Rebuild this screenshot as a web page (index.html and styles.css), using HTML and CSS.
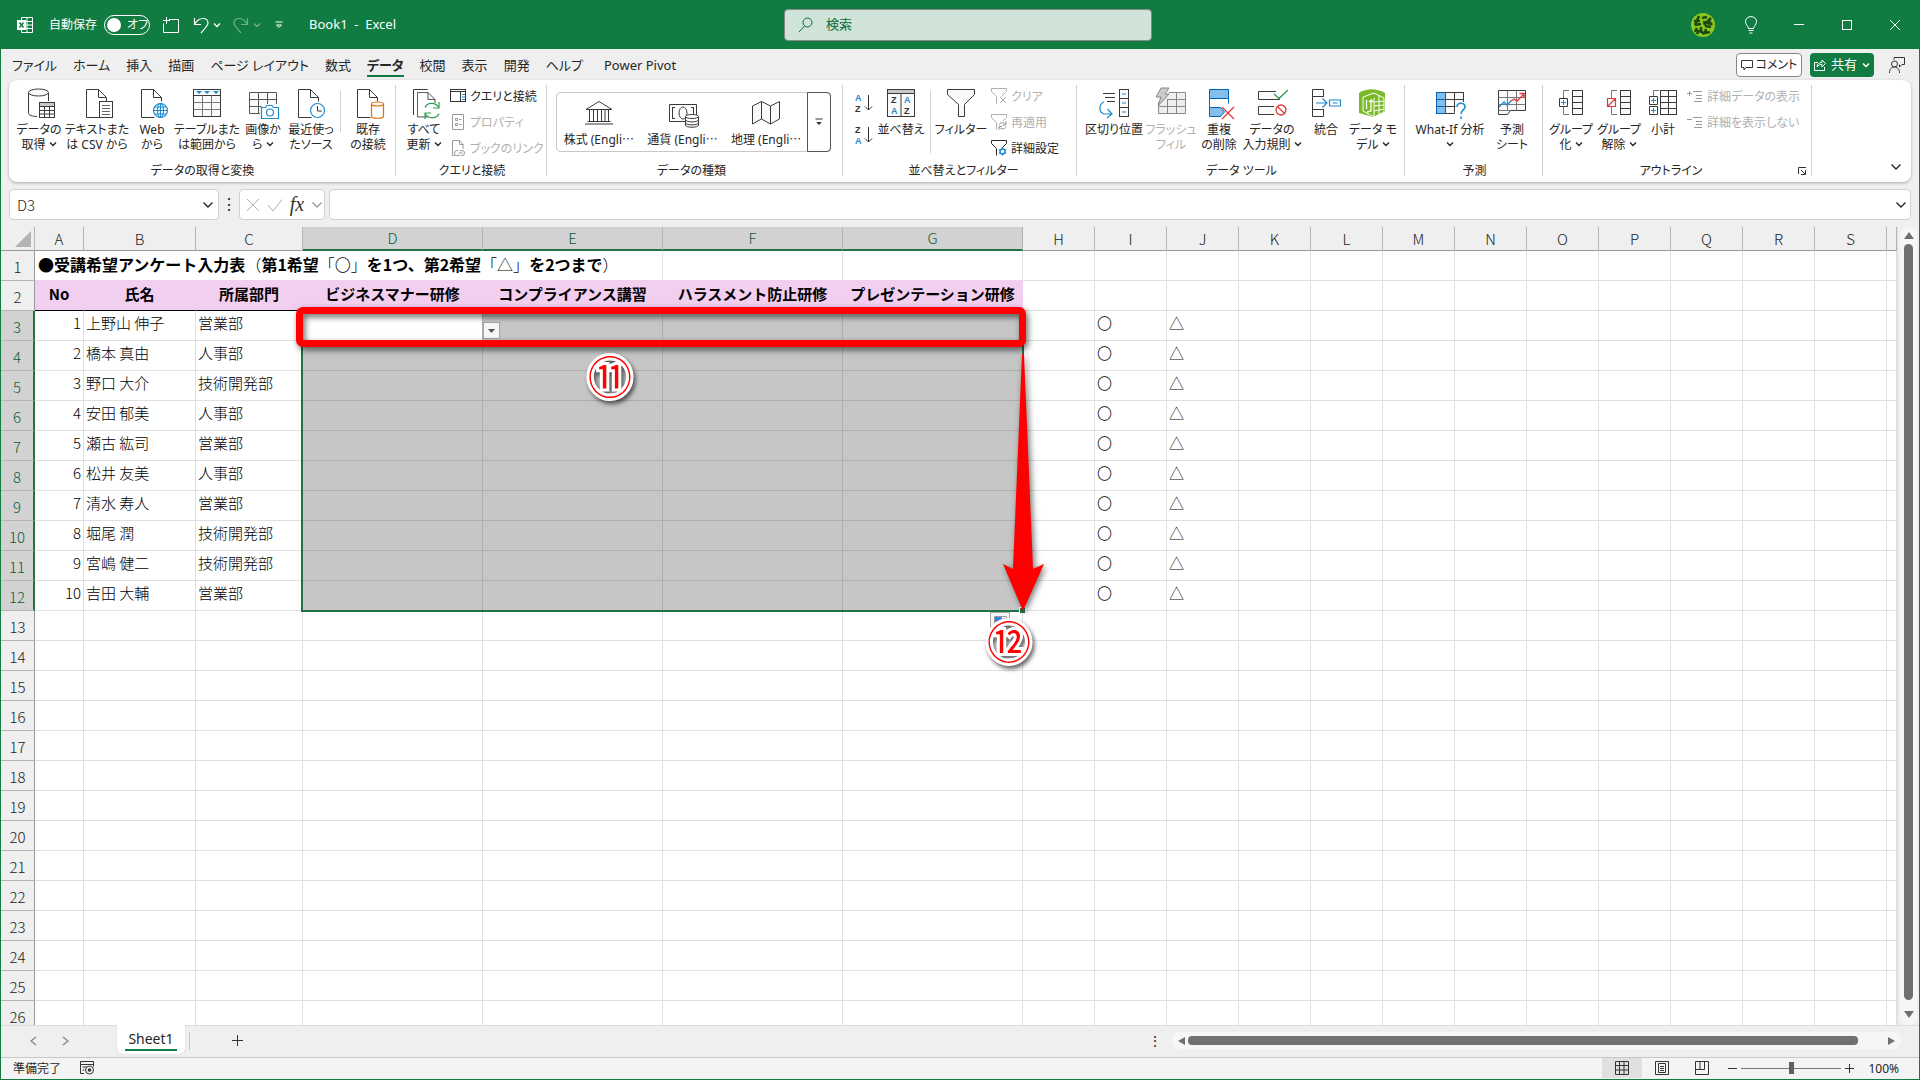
FILE: index.html
```html
<!DOCTYPE html>
<html lang="ja">
<head>
<meta charset="utf-8">
<title>Book1 - Excel</title>
<link rel="stylesheet" href="styles.css">
</head>
<body>
<svg class="defs" aria-hidden="true">
  <symbol id="chev" viewBox="0 0 8 6"><path d="M1 1.5l3 3 3-3" fill="none" stroke="currentColor" stroke-width="1.4"/></symbol>
  <symbol id="chev-lg" viewBox="0 0 12 8"><path d="M1.500 1.500l4.500 4.500 4.500-4.500" fill="none" stroke="currentColor" stroke-width="1.400"/></symbol>
  <symbol id="doc" viewBox="0 0 32 32"><path d="M.5 28.500V.5h12l8 8v4" fill="none" stroke="#3a3a3a"/><path d="M12.500.5v8h8" fill="none" stroke="#3a3a3a"/><path d="M.5 28.500h13" stroke="#3a3a3a"/></symbol>
  <symbol id="funnel" viewBox="0 0 16 16"><path d="M.5.5h15v3l-5 5v7M.5 3.500l5 5v7M.5.5v3" fill="none" stroke="currentColor"/></symbol>
</svg>
<div class="app">
  <header class="titlebar">
    <div class="title-left">
      <svg class="i16" viewBox="0 0 16 16" aria-hidden="true"><path d="M4.500 3V.5h11v15h-11V13M10 .5v15M5 4.500h10.500M9 8h6.500M5 11.500h10.500" fill="none" stroke="#fff"/><rect y="3" width="9" height="10" fill="#fff"/><path d="M2.500 5.500l4 5M6.500 5.500l-4 5" stroke="#107c41" stroke-width="1.500"/></svg>
      <label class="autosave"><span>自動保存</span><span class="pill"><input type="checkbox" role="switch" aria-label="自動保存"><span>オフ</span></span></label>
      <button class="tbtn save" aria-label="保存"><svg class="i16" viewBox="0 0 16 16"><path d="M6 2.500h9.500v13H.5v-9M0 3.500h7M3.500 0v7" fill="none" stroke="#fff"/></svg></button>
      <button class="tbtn" aria-label="元に戻す"><svg class="i16" viewBox="0 0 16 16"><path d="M1.500 1v6.500H8M1.500 7.500C4 3 7 1.500 10 1.500c3 0 5 2 5 4.500s-2 4-7 10" fill="none" stroke="#fff" stroke-width="1.200"/></svg><svg class="chev"><use href="#chev"/></svg></button>
      <button class="tbtn dim" aria-label="やり直し"><svg class="i16" viewBox="0 0 16 16"><path d="M14.500 1v6.500H8M14.500 7.500C12 3 9 1.500 6 1.500c-3 0-5 2-5 4.500s2 4 7 10" fill="none" stroke="#fff" stroke-width="1.200"/></svg><svg class="chev"><use href="#chev"/></svg></button>
      <button class="tbtn qat" aria-label="カスタマイズ"><svg viewBox="0 0 8 8" width="8" height="8"><path d="M.5 1h7" stroke="#fff"/><path d="M1.500 4h5L4 6.500z" fill="none" stroke="#fff"/></svg></button>
      <span class="doc-title">Book1&nbsp; -&nbsp; Excel</span>
    </div>
    <label class="search"><svg class="i16" viewBox="0 0 16 16" aria-hidden="true"><circle cx="9.500" cy="5.500" r="4.500" fill="none" stroke="#0e6b38"/><path d="M6.500 9L1 15" stroke="#0e6b38"/></svg><input type="text" placeholder="検索" aria-label="検索"></label>
    <div class="title-right">
      <button class="wbtn" aria-label="アカウント"><svg viewBox="0 0 24 24" width="24" height="24"><circle cx="12" cy="12" r="12" fill="#8bc81c"/><path d="M3 8h6M8 3L4 12M4 12l6-1M6 15l-2 4M10 14v6M11 5l5-1M20 5l-7 7M12 9l8 2M14 13l6 1M9 17l4 4M15 16l-1 4 5-1M18 8l3 4M6 21l2-4" fill="none" stroke="#1c4a12" stroke-width="2.600"/></svg></button>
      <button class="wbtn" aria-label="ヒント"><svg viewBox="0 0 12 18" width="12" height="18"><path d="M3.500 12.500c0-2.500-3-3.500-3-7C.5 2.500 3 .6 6 .6s5.500 1.900 5.500 4.900c0 3.500-3 4.500-3 7zM3.500 14.500h5M4.500 17h3" fill="none" stroke="#fff"/></svg></button>
      <button class="wbtn" aria-label="最小化"><svg viewBox="0 0 10 10" width="10" height="10"><path d="M0 4.500h10" stroke="#fff"/></svg></button>
      <button class="wbtn" aria-label="最大化"><svg viewBox="0 0 10 10" width="10" height="10"><rect x=".5" y=".5" width="9" height="9" fill="none" stroke="#fff"/></svg></button>
      <button class="wbtn" aria-label="閉じる"><svg viewBox="0 0 10 10" width="10" height="10"><path d="M0 0l10 10M10 0L0 10" stroke="#fff"/></svg></button>
    </div>
  </header>

  <nav class="tabs">
    <a href="#">ファイル</a><a href="#">ホーム</a><a href="#">挿入</a><a href="#">描画</a><a href="#">ページ レイアウト</a><a href="#">数式</a><a href="#" class="active" aria-current="page">データ</a><a href="#">校閲</a><a href="#">表示</a><a href="#">開発</a><a href="#">ヘルプ</a><a href="#" class="pivot">Power Pivot</a>
    <div class="tab-actions">
      <button class="comment"><svg viewBox="0 0 12 12" width="12" height="12"><path d="M.5 1.500h11v7H5L3 11V8.500H.5z" fill="none" stroke="#333"/></svg>コメント</button>
      <button class="share"><svg viewBox="0 0 12 12" width="12" height="12"><path d="M4 3.500H.5v8h10V8M3 8c0-3 2-4.500 5-4.500V1l3.500 3.500L8 8V5.500C6 5.500 4.500 6 3 8z" fill="none" stroke="#fff"/></svg>共有<svg class="chev"><use href="#chev"/></svg></button>
      <button class="plain" aria-label="共同作業"><svg class="i16" viewBox="0 0 16 16"><circle cx="5.500" cy="7" r="3" fill="none" stroke="#333"/><path d="M.5 16c0-4 2-6 5-6s5 2 5 6M5 2.500V.5h10.500v7H13l-2.500 2.500V7.500" fill="none" stroke="#333"/></svg></button>
    </div>
  </nav>

  <section class="ribbon" aria-label="データ">
    <div class="group g-get">
      <div class="tools">
        <button class="big w50"><svg viewBox="0 0 32 32"><path d="M5.500 5v20.500c0 1.500 4 3 8.500 3M25.500 5v8" fill="none" stroke="#3a3a3a"/><ellipse cx="15.500" cy="4.500" rx="10" ry="3.500" fill="#fafafa" stroke="#3a3a3a"/><rect x="16.500" y="14.500" width="15" height="15" fill="#fff" stroke="#3a3a3a"/><path d="M17 15h14v3H17z" fill="#c8c8c8"/><path d="M16.500 18.500h15M16.500 22.500h15M16.500 26h15M21.500 18.500v11M26.500 18.500v11" stroke="#3a3a3a"/></svg><span>データの<br>取得 <svg class="chev"><use href="#chev"/></svg></span></button>
        <button class="big w66"><svg viewBox="0 0 32 32"><use href="#doc" x="5" y="1" width="32" height="32"/><rect x="18.500" y="13.500" width="13" height="16" fill="#fff" stroke="#3a3a3a"/><path d="M21 17.500h8M21 20.500h8M21 23.500h8M21 26.500h8" stroke="#666"/></svg><span>テキストまた<br>は CSV から</span></button>
        <button class="big w44"><svg viewBox="0 0 32 32"><use href="#doc" x="5" y="1" width="32" height="32"/><g fill="#fff" stroke="#1e8bcd" stroke-width="1.200"><circle cx="24.500" cy="22.500" r="7"/><ellipse cx="24.500" cy="22.500" rx="3" ry="7" fill="none"/><path d="M17.500 22.500h14M18.500 19h12M18.500 26h12M24.500 15.500v14"/></g></svg><span>Web<br>から</span></button>
        <button class="big w66"><svg viewBox="0 0 32 32"><rect x="2.500" y="1.500" width="27" height="27" fill="#fafafa" stroke="#3a3a3a"/><path d="M2.500 7.500h27" stroke="#3a3a3a"/><path d="M2.500 14.500h27M2.500 21.500h27M11.500 7.500v21M20.500 7.500v21" stroke="#777"/><path d="M5 3h6L8 6zM13 3h6l-3 3zM22 3h6l-3 3z" fill="#1e8bcd"/></svg><span>テーブルまた<br>は範囲から</span></button>
        <button class="big w46"><svg viewBox="0 0 32 32"><rect x="2.500" y="4.500" width="27" height="21" fill="#fafafa"/><path d="M13 25.500H2.500v-21h27V16M2.500 11.500h27M2.500 18.500h12M11.500 4.500v21M20.500 4.500V16" fill="none" stroke="#555"/><path d="M14.500 19.500h4l1.500-2h5l1.500 2h5v11h-17z" fill="#fff" stroke="#1e8bcd" stroke-width="1.200"/><circle cx="23" cy="24.500" r="3.500" fill="none" stroke="#1e8bcd" stroke-width="1.200"/></svg><span>画像か<br>ら <svg class="chev"><use href="#chev"/></svg></span></button>
        <button class="big w50"><svg viewBox="0 0 32 32"><use href="#doc" x="3" y="1" width="32" height="32"/><circle cx="22.500" cy="22.500" r="7" fill="#fff" stroke="#1e8bcd" stroke-width="1.200"/><path d="M22.500 18v5H27" fill="none" stroke="#3a3a3a"/></svg><span>最近使っ<br>たソース</span></button>
        <i class="vsep"></i>
        <button class="big w46"><svg viewBox="0 0 32 32"><use href="#doc" x="5" y="1" width="32" height="32"/><path d="M19.500 16v12c0 3 12 3 12 0V16" fill="#fff" stroke="#e07000" stroke-width="1.200"/><ellipse cx="25.500" cy="16" rx="6" ry="2" fill="#fff" stroke="#e07000" stroke-width="1.200"/></svg><span>既存<br>の接続</span></button>
      </div>
      <div class="glabel">データの取得と変換</div>
    </div>
    <div class="group g-query">
      <div class="tools">
        <button class="big w44"><svg viewBox="0 0 32 32"><path d="M5.500 27V1.500h14" fill="none" stroke="#3a3a3a"/><use href="#doc" x="9" y="4" width="28" height="28"/><path d="M17 19.500c2-5 10-6 14 0M31 14v6h-6M31 25.500c-2 5-10 6-14 0M17 31v-6h6" fill="none" stroke="#2ea04f" stroke-width="1.200"/></svg><span>すべて<br>更新 <svg class="chev"><use href="#chev"/></svg></span></button>
        <div class="smalls">
          <button><svg class="i16" viewBox="0 0 16 16"><rect x=".5" y="1.500" width="15" height="12" fill="#fff" stroke="#333"/><path d="M.5 3.500h15M10.500 4v9.500" stroke="#333"/><path d="M12 6.500h3M12 9h3M12 11.500h3" stroke="#1e8bcd"/></svg>クエリと接続</button>
          <button disabled><svg class="i16" viewBox="0 0 16 16"><path d="M2.500.5h11v15h-11zM5.500 4.500h2v2h-2zM5.500 9.500h2v2h-2zM9 5.500h2.500M9 10.500h2.500" fill="none" stroke="#999"/></svg>プロパティ</button>
          <button disabled><svg class="i16" viewBox="0 0 16 16"><path d="M5 15.500H2.500V.5h7l3.500 4V9M9.500.5v4h4" fill="none" stroke="#999"/><path d="M8 10.500h-1a2 2 0 000 5h3M10 10.500h2a2 2 0 010 5h-1M8.500 13h4" fill="none" stroke="#999"/></svg>ブックのリンク</button>
        </div>
      </div>
      <div class="glabel">クエリと接続</div>
    </div>
    <div class="group g-types">
      <div class="gallery">
        <button><svg viewBox="0 0 32 26"><path d="M3 10.500l13-8 13 8zM4.500 22.500h23M2 25h28M6.500 11v11M10.500 11v11M14.500 11v11M18.500 11v11M22 11v11M25.500 11v11" fill="none" stroke="#3a3a3a"/></svg><span>株式 (Engli<span class="cjk">…</span></span></button>
        <button><svg viewBox="0 0 32 26"><path d="M18 22.500H2.500v-17h27V16M5 8.500h3M5 19.500h3M24 8.500h3M5.500 8v12M26.500 8v7" fill="none" stroke="#3a3a3a"/><ellipse cx="16" cy="14" rx="4" ry="6" fill="none" stroke="#3a3a3a"/><path d="M18.500 18v8c0 3 13 3 13 0v-8" fill="#fff" stroke="#3a3a3a"/><ellipse cx="25" cy="17.500" rx="6.500" ry="2" fill="#fff" stroke="#3a3a3a"/><path d="M18.500 21c1 2.500 12 2.500 13 0M18.500 24c1 2.500 12 2.500 13 0" fill="none" stroke="#3a3a3a"/></svg><span>通貨 (Engli<span class="cjk">…</span></span></button>
        <button><svg viewBox="0 0 32 26"><path d="M2.500 7l9-4.500 9 4.500 9-4.500V20l-9 5-9-5-9 5zM11.500 2.500V20M20.500 7v18" fill="#fafafa" stroke="#3a3a3a"/></svg><span>地理 (Engli<span class="cjk">…</span></span></button>
        <button class="more" aria-label="その他"><svg viewBox="0 0 8 8" width="8" height="8"><path d="M.5 1h7M2 4.500l2 2 2-2z" stroke="#333" fill="#333"/></svg></button>
      </div>
      <div class="glabel">データの種類</div>
    </div>
    <div class="group g-sort">
      <div class="tools">
        <div class="sorts">
          <button aria-label="昇順"><svg viewBox="0 0 18 20"><text x="0" y="8" class="ltr blue">A</text><text x="0" y="19" class="ltr">Z</text><path d="M13.500 2v15M10 13.500l3.500 3.500 3.500-3.500" fill="none" stroke="#333"/></svg></button>
          <button aria-label="降順"><svg viewBox="0 0 18 20"><text x="0" y="8" class="ltr">Z</text><text x="0" y="19" class="ltr blue">A</text><path d="M13.500 2v15M10 13.500l3.500 3.500 3.500-3.500" fill="none" stroke="#333"/></svg></button>
        </div>
        <button class="big w50"><svg viewBox="0 0 32 32"><rect x="2.500" y="1.500" width="27" height="27" fill="#fafafa" stroke="#3a3a3a"/><path d="M3 2h26v3H3z" fill="#c8c8c8"/><path d="M2.500 5.500h27M16 5.500v23" stroke="#3a3a3a"/><text x="6" y="15" class="ltr">Z</text><text x="6" y="26" class="ltr blue">A</text><text x="19" y="15" class="ltr blue">A</text><text x="19" y="26" class="ltr">Z</text></svg><span>並べ替え</span></button>
        <i class="vsep long"></i>
        <button class="big w52"><svg viewBox="0 0 32 32"><path d="M2.500 1.500h27v5l-10 10v12h-6v-12l-11-10z" fill="#fafafa" stroke="#3a3a3a"/></svg><span>フィルター</span></button>
        <div class="smalls">
          <button disabled><svg class="i16" viewBox="0 0 16 16"><use href="#funnel"/><path d="M8 9h8v7H8z" fill="#fff"/><path d="M9 9l6 6M15 9l-6 6" stroke="#aaa"/></svg>クリア</button>
          <button disabled><svg class="i16" viewBox="0 0 16 16"><use href="#funnel"/><path d="M7 7h9v9H7z" fill="#fff"/><path d="M8 11c1-3 5-3 7-.5M15 7v4h-3.500M15 12.500c-1 3-5 3-7 .5M8 16v-3.500h3" fill="none" stroke="#999"/></svg>再適用</button>
          <button><svg class="i16" viewBox="0 0 16 16"><use href="#funnel"/><path d="M7 8h9v8H7z" fill="#fff"/><circle cx="11.500" cy="11.500" r="2.500" fill="none" stroke="#1e8bcd" stroke-width="1.500"/><path d="M11.500 7.500v2M11.500 13.500v2M8 9.500l1.500 1M13.500 12.500l1.500 1M15 9.500l-1.500 1M9.500 12.500L8 13.500" stroke="#1e8bcd" stroke-width="1.500"/></svg>詳細設定</button>
        </div>
      </div>
      <div class="glabel">並べ替えとフィルター</div>
    </div>
    <div class="group g-tools">
      <div class="tools">
        <button class="big w62"><svg viewBox="0 0 32 32"><path d="M5 5.500h12M7 9.500h10M9 13.500h8" stroke="#3a3a3a"/><rect x="21.500" y="1.500" width="9" height="27" fill="#fafafa" stroke="#3a3a3a"/><path d="M21.500 10.500h9M21.500 19.500h9" stroke="#3a3a3a"/><path d="M24 6h4M24 15h4M24 24h4M6 14c-5 2-6 10 0 12h8M9.500 21l4.500 5-5 4" fill="none" stroke="#1e8bcd" stroke-width="1.200"/></svg><span>区切り位置</span></button>
        <button class="big w52" disabled><svg viewBox="0 0 32 32"><rect x="3.500" y="5.500" width="27" height="20" fill="#eee"/><path d="M3.500 14v11.500h27v-21H14M3.500 18.500h27M12 11.500h18.500M12.500 11v14.500M21.500 4.500v21" fill="none" stroke="#888"/><path d="M6 0h8l-4 6h4L3 18l3-9H1z" fill="#ccc" stroke="#888"/></svg><span>フラッシュ<br>フィル</span></button>
        <button class="big w44"><svg viewBox="0 0 32 32"><path d="M6.500 1.500h19v9h-19z" fill="#83beec" stroke="#0063b1"/><path d="M6.500 10.500v9M25.500 10.500v5" stroke="#0063b1"/><path d="M6.500 19.500h11l4 4.500-4 4.500h-11z" fill="#83beec" stroke="#0063b1"/><path d="M19 19l12 12M31 19L19 31" stroke="#e03a3a" stroke-width="1.300"/></svg><span>重複<br>の削除</span></button>
        <button class="big w62"><svg viewBox="0 0 32 32"><path d="M20 3.500H2.500v8h21V9M18 18.500H2.500v8H18" fill="#fafafa" stroke="#3a3a3a"/><path d="M18 6l5 4.500L32 2" fill="none" stroke="#2ea04f" stroke-width="1.300"/><circle cx="25" cy="22" r="5" fill="#fff" stroke="#e03a3a" stroke-width="1.300"/><path d="M21.500 18.500l7 7" stroke="#e03a3a" stroke-width="1.300"/></svg><span>データの<br>入力規則 <svg class="chev"><use href="#chev"/></svg></span></button>
        <button class="big w46"><svg viewBox="0 0 32 32"><path d="M13.500 9V1.500h-11v27h11V21M2.500 8.500h11M2.500 21.500h11" fill="none" stroke="#3a3a3a"/><path d="M6 15h11M12.500 10.500L17 15l-4.500 4.500M19.500 12h11v6h-11zM22.500 15h5" fill="none" stroke="#1e8bcd" stroke-width="1.200"/></svg><span>統合</span></button>
        <button class="big w48"><svg viewBox="0 0 32 32"><path d="M2 5c8-5 17-5 26 0v19l-12 5L2 25z" fill="#7aba28"/><path d="M6 9l11-4 10 5v14l-10 5-11-6z" fill="none" stroke="#fff"/><path d="M17 10v18M17 14l10-1M17 18l10-1M17 23l10-2M22 8v18" stroke="#fff"/><path d="M9.500 12v9M10 24l4-1V12l-2 2M14 12l2 2" fill="none" stroke="#fff" stroke-width="1.300"/></svg><span>データ モ<br>デル <svg class="chev"><use href="#chev"/></svg></span></button>
      </div>
      <div class="glabel">データ ツール</div>
    </div>
    <div class="group g-forecast">
      <div class="tools">
        <button class="big w78"><svg viewBox="0 0 32 32"><rect x="2.500" y="4.500" width="27" height="21" fill="#fafafa" stroke="#3a3a3a"/><path d="M2.500 11.500h27M2.500 18.500h27M11.500 4.500v21M20.500 4.500v21" stroke="#3a3a3a"/><path d="M2.500 4.500h9v21h-9zM2.500 11.500h9M2.500 18.500h9" fill="#83beec" stroke="#0063b1"/><path d="M22 14h11v18H20z" fill="#fff"/><path d="M23 19c0-5 8-5 8 0 0 3-4 3-4 7M27 28.500v2.500" fill="none" stroke="#1e8bcd" stroke-width="1.600"/></svg><span>What-If 分析<br><svg class="chev"><use href="#chev"/></svg></span></button>
        <button class="big w46"><svg viewBox="0 0 32 32"><path d="M2.500 2.500h27v20h-15l-3 4h-9z" fill="#fafafa" stroke="#3a3a3a"/><path d="M2.500 9.500h27M2.500 16.500h27M11.500 2.500v20M20.500 2.500v20M2.500 22.500h12" stroke="#777"/><path d="M3 19l5-5 3 3 4-4" fill="none" stroke="#1e8bcd" stroke-width="1.400"/><path d="M15 13l3-2 3 2 7-7M23.500 5.500H28V10" fill="none" stroke="#e03a3a" stroke-width="1.400"/></svg><span>予測<br>シート</span></button>
      </div>
      <div class="glabel">予測</div>
    </div>
    <div class="group g-outline">
      <div class="tools">
        <button class="big w48"><svg viewBox="0 0 32 32"><path d="M14 2.500H8.500V10M8.500 19v7.500H14" fill="none" stroke="#777"/><rect x="17.500" y="2.500" width="10" height="24" fill="#fafafa" stroke="#3a3a3a"/><path d="M17.500 8.500h10M17.500 14.500h10M17.500 20.500h10" stroke="#3a3a3a"/><path d="M4.500 10.500h8v8h-8z" fill="#fff" stroke="#3a3a3a"/><path d="M6 14.500h5M8.500 12v5" stroke="#1e8bcd"/></svg><span>グループ<br>化 <svg class="chev"><use href="#chev"/></svg></span></button>
        <button class="big w48"><svg viewBox="0 0 32 32"><path d="M14 2.500H8.500V10M8.500 19v7.500H14" fill="none" stroke="#777"/><rect x="17.500" y="2.500" width="10" height="24" fill="#fafafa" stroke="#3a3a3a"/><path d="M17.500 8.500h10M17.500 14.500h10M17.500 20.500h10" stroke="#3a3a3a"/><path d="M4.500 10.500h8v8h-8zM4.500 18.500l8-8" fill="#fff" stroke="#e03a3a" stroke-width="1.200"/></svg><span>グループ<br>解除 <svg class="chev"><use href="#chev"/></svg></span></button>
        <button class="big w40"><svg viewBox="0 0 32 32"><path d="M12 2.500H6.500V8" fill="none" stroke="#777"/><rect x="13.500" y="2.500" width="16" height="24" fill="#fafafa" stroke="#3a3a3a"/><path d="M13.500 8.500h16M13.500 14.500h16M13.500 20.500h16M21.500 2.500v24" stroke="#3a3a3a"/><path d="M2.500 8.500h8v8h-8zM2.500 18.500h8v8h-8z" fill="#fff" stroke="#3a3a3a"/><path d="M4 12.500h5M6.500 10v5M4 22.500h5M6.500 20v5" stroke="#1e8bcd"/></svg><span>小計</span></button>
        <div class="smalls">
          <button disabled><svg class="i16" viewBox="0 0 16 16"><path d="M0 5.500h5M2.500 3v5M6 3.500h9M9 7.500h6M9 10.500h6M7 13.500h8" stroke="#999"/></svg>詳細データの表示</button>
          <button disabled><svg class="i16" viewBox="0 0 16 16"><path d="M0 5.500h5M6 3.500h9M9 7.500h6M9 10.500h6M7 13.500h8" stroke="#999"/></svg>詳細を表示しない</button>
        </div>
      </div>
      <div class="glabel"><span>アウトライン</span><button class="launcher" aria-label="アウトラインの設定"><svg viewBox="0 0 9 9" width="9" height="9"><path d="M.5 7V.5H8M3 3l4 4M7.500 3v4.500H3" fill="none" stroke="#333"/></svg></button></div>
    </div>
    <button class="collapse" aria-label="リボンを折りたたむ"><svg class="chev-lg"><use href="#chev-lg"/></svg></button>
  </section>

  <div class="formula">
    <div class="fbox namebox"><input type="text" value="D3" aria-label="名前ボックス"><button aria-label="名前の一覧"><svg class="chev-lg"><use href="#chev-lg"/></svg></button></div>
    <span class="dots">⋮</span>
    <div class="fbox fx">
      <button aria-label="キャンセル"><svg viewBox="0 0 14 14" width="14" height="14"><path d="M1 1l12 12M13 1L1 13" stroke="#b0b0b0"/></svg></button>
      <button aria-label="入力"><svg viewBox="0 0 16 14" width="16" height="14"><path d="M1 7l5 6L15 1.500" fill="none" stroke="#b0b0b0"/></svg></button>
      <button aria-label="関数の挿入" class="fxbtn">fx</button>
      <button aria-label="関数の一覧"><svg class="chev-lg grey"><use href="#chev-lg"/></svg></button>
    </div>
    <div class="fbox finput"><input type="text" aria-label="数式バー"><button aria-label="数式バーの展開"><svg class="chev-lg"><use href="#chev-lg"/></svg></button></div>
  </div>

  <main class="work">
    <div class="sheet">
      <table class="grid" id="grid"></table>
      <div class="selection"><i class="handle"></i></div>
      <button class="dropdown" aria-label="リストから選択"><svg viewBox="0 0 7 4" width="7" height="4"><path d="M0 0h7L3.500 4z" fill="#555"/></svg></button>
      <button class="autofill" aria-label="オートフィル オプション"><svg viewBox="0 0 13 12" width="13" height="12"><path d="M.5.5h12v11H.5z" fill="#fff" stroke="#999"/><path d="M1 1h6v4H1z" fill="#3b7bf0"/><path d="M7.500 1v4.500H1M9 2.500h3" fill="none" stroke="#888"/></svg></button>
      <div class="frame"></div>
      <svg class="arrow" viewBox="0 0 50 270" width="50" height="270" aria-hidden="true"><path d="M25 5h2l9 215 11-5-21 47-20-47 10 5z" fill="#f00"/></svg>
      <span class="mark m11">⑪</span>
      <span class="mark m12">⑫</span>
    </div>
    <div class="vscroll" aria-hidden="true"><i class="up"></i><i class="vthumb"></i><i class="down"></i></div>
  </main>

  <div class="sheetbar">
    <div class="sheetnav">
      <button class="nav" aria-label="前のシート"><svg viewBox="0 0 7 10" width="7" height="10"><path d="M6 1L1 5l5 4" fill="none" stroke="currentColor" stroke-width="1.300"/></svg></button>
      <button class="nav" aria-label="次のシート"><svg viewBox="0 0 7 10" width="7" height="10"><path d="M1 1l5 4-5 4" fill="none" stroke="currentColor" stroke-width="1.300"/></svg></button>
    </div>
    <a href="#" class="sheettab"><span>Sheet1</span></a>
    <i class="tabsep"></i>
    <button class="add" aria-label="新しいシート"><svg viewBox="0 0 11 11" width="11" height="11"><path d="M5.500 0v11M0 5.500h11" stroke="#333"/></svg></button>
    <span class="dots hdots">⋮</span>
    <div class="hscroll" aria-hidden="true"><i class="left"></i><i class="hthumb"></i><i class="right"></i></div>
  </div>

  <footer class="status">
    <span>準備完了</span>
    <svg class="macro" viewBox="0 0 14 14" width="14" height="14" aria-hidden="true"><path d="M4 12.500H.5V.5h13v5M.5 3.500h13M2.500 6h4M2.500 9h2" fill="none" stroke="#333"/><circle cx="9.500" cy="9" r="4" fill="none" stroke="#333"/><circle cx="9.500" cy="9" r="1.800" fill="#333"/></svg>
    <div class="views">
      <button class="view on" aria-label="標準"><svg viewBox="0 0 14 14" width="14" height="14"><path d="M.5.5h13v13H.5zM.5 4.500h13M.5 9h13M4.500.5v13M9 .5v13" fill="none" stroke="#333"/></svg></button>
      <button class="view" aria-label="ページ レイアウト"><svg viewBox="0 0 14 14" width="14" height="14"><path d="M.5.5h13v13H.5zM3.500 2.500h7v9h-7zM5 5.500h4M5 7.500h4M5 9.500h4" fill="none" stroke="#333"/></svg></button>
      <button class="view" aria-label="改ページ プレビュー"><svg viewBox="0 0 14 14" width="14" height="14"><path d="M.5.5h13v13H.5zM.5 8.500h9v-8M5 .5v8" fill="none" stroke="#333"/></svg></button>
      <button class="zbtn" aria-label="縮小"><svg viewBox="0 0 9 9" width="9" height="9"><path d="M0 4.500h9" stroke="#333"/></svg></button>
      <input class="zoom" type="range" min="0" max="200" value="100" aria-label="ズーム">
      <button class="zbtn" aria-label="拡大"><svg viewBox="0 0 9 9" width="9" height="9"><path d="M0 4.500h9M4.500 0v9" stroke="#333"/></svg></button>
      <span class="pct">100%</span>
    </div>
  </footer>
</div>
<script src="grid.js"></script>
</body>
</html>
```
FILE: styles.css
```css
* { box-sizing: border-box; }
body {
  margin: 0;
  font: 12px/15px "Noto Sans", "Noto Sans CJK JP", sans-serif;
  font-feature-settings: "palt";
  color: #262626;
}
button, input { font: inherit; font-feature-settings: inherit; color: inherit; }
button { border: 0; background: none; padding: 0; }
button svg, label svg { display: block; flex: none; overflow: visible; }
a { color: inherit; text-decoration: none; }
.defs { position: absolute; width: 0; height: 0; }
.i16 { width: 16px; height: 16px; flex: none; }
.chev { width: 8px; height: 6px; flex: none; }
.chev-lg { width: 12px; height: 8px; flex: none; }
.grey { color: #999; }
.cjk { font-family: "Noto Sans CJK JP", sans-serif; font-feature-settings: normal; }

.app {
  display: flex;
  flex-direction: column;
  height: 100vh;
  overflow: hidden;
  background: #efefef;
  border: solid #107c41;
  border-width: 0 1px 1px;
}

/* Title bar */
.titlebar {
  display: grid;
  grid-template-columns: 1fr 368px 1fr;
  align-items: center;
  flex: none;
  height: 49px;
  padding-left: 16px;
  background: #107c41;
  color: #fff;
}
.title-left { display: flex; align-items: center; white-space: nowrap; }
.autosave { display: flex; align-items: center; gap: 7px; margin-left: 16px; }
.pill { display: flex; align-items: center; gap: 6px; width: 46px; height: 20px; padding: 0 2px; border: 1px solid #fff; border-radius: 10px; }
.pill input { appearance: none; flex: none; width: 14px; height: 14px; margin: 0; border-radius: 7px; background: #fff; }
.tbtn { display: flex; align-items: center; gap: 4px; height: 32px; margin-right: 12px; }
.save { margin: 0 14px 0 13px; }
.dim { opacity: .4; }
.qat { margin: 0 26px 0 2px; }
.doc-title { font-size: 13px; }
.search { display: flex; align-items: center; gap: 12px; height: 32px; padding: 0 13px; border: 1px solid #888; border-radius: 4px; background: #cfe3d8; }
.search input { flex: 1; min-width: 0; border: 0; padding: 0; background: none; outline: 0; font-size: 13px; }
.search input::placeholder { color: #0e6b38; opacity: 1; }
.title-right { display: flex; justify-content: flex-end; }
.wbtn { display: flex; align-items: center; justify-content: center; width: 48px; height: 48px; }

/* Ribbon tabs */
.tabs { display: flex; align-items: center; gap: 16px; flex: none; height: 31px; padding: 0 14px 0 11px; font-size: 13px; }
.tabs a { white-space: nowrap; line-height: 20px; border-bottom: 2px solid transparent; padding-top: 2px; }
.tabs .active { font-weight: 600; border-color: #107c41; }
.pivot { margin-left: 5px; }
.tab-actions { display: flex; align-items: center; gap: 8px; margin-left: auto; }
.tab-actions button { display: flex; align-items: center; justify-content: center; }
.tab-actions .comment { gap: 3px; width: 66px; height: 24px; border: 1px solid #888; border-radius: 4px; background: #fff; font-size: 12px; }
.tab-actions .share { gap: 5px; width: 64px; height: 24px; border-radius: 4px; background: #107c41; color: #fff; }
.plain { margin-left: 7px; }

/* Ribbon */
.ribbon {
  display: flex;
  flex: none;
  height: 102px;
  margin: 0 8px;
  padding: 5px 0 6px;
  border-radius: 8px;
  background: #fff;
  box-shadow: 0 1px 3px rgba(0, 0, 0, .3);
}
.group { display: flex; flex-direction: column; flex: none; border-right: 1px solid #d0d0d0; }
.g-get { width: 387px; padding-left: 5px; }
.g-query { width: 151px; padding-left: 6px; }
.g-types { width: 296px; padding: 0 11px 0 9px; }
.g-sort { width: 234px; padding-left: 12px; }
.g-tools { width: 328px; padding-left: 6px; }
.g-forecast { width: 138px; padding-left: 6px; }
.g-outline { width: 269px; padding-left: 4px; }
.tools { display: flex; flex: 1; padding-top: 3px; }
.glabel { display: flex; align-items: center; justify-content: center; height: 11px; padding-right: 4px; }
.launcher { margin-top: 2px; }
.glabel:has(.launcher) span { flex: 1; padding-right: 3px; text-align: center; }
.big { display: flex; flex-direction: column; align-items: center; gap: 2px; white-space: nowrap; flex: none; }
.big > svg { width: 32px; height: 32px; }
.big span { text-align: center; }
.big span svg { display: inline-block; vertical-align: 2px; }
.w40 { width: 40px; }
.w44 { width: 44px; }
.w46 { width: 46px; }
.w48 { width: 48px; }
.w50 { width: 50px; }
.w52 { width: 52px; }
.w62 { width: 62px; }
.w66 { width: 66px; }
.w78 { width: 78px; }
button:disabled { color: #b0b0b0; }
.vsep { flex: none; width: 1px; height: 41px; margin: 3px 4px 0; background: #d0d0d0; }
.long { height: 62px; }
.smalls { display: flex; flex-direction: column; gap: 10px; margin-left: 4px; }
.smalls button { display: flex; align-items: center; gap: 4px; height: 16px; white-space: nowrap; }
.sorts { display: flex; flex-direction: column; gap: 12px; padding-top: 5px; margin-right: 3px; }
.sorts svg { width: 18px; height: 20px; }
.ltr { font: 700 9px "Liberation Sans", sans-serif; fill: #333; }
.ltr.blue { fill: #1e8bcd; }
.gallery { display: flex; height: 60px; margin: 7px 0 auto; border: 1px solid #c8c8c8; border-radius: 4px; }
.gallery button { display: flex; flex-direction: column; align-items: center; justify-content: center; flex: 1; gap: 5px; white-space: nowrap; }
.gallery button svg { width: 32px; height: 28px; }
.gallery .more { flex: none; width: 24px; margin: -1px; border: 1px solid #555; border-radius: 0 4px 4px 0; }
.gallery .more svg { width: 8px; height: 8px; }
.collapse { margin: auto 9px 5px auto; }

/* Formula bar */
.formula { display: flex; flex: none; align-items: center; padding: 7px 8px; }
.fbox { display: flex; align-items: center; height: 31px; border: 1px solid #d0d0d0; border-radius: 4px; background: #fff; }
.fbox input { flex: 1; min-width: 0; border: 0; padding: 0; background: none; outline: 0; font-family: "Noto Sans CJK JP", sans-serif; font-size: 15px; font-weight: 300; }
.namebox { width: 210px; padding: 0 4px 0 7px; }
.dots { width: 20px; text-align: center; font-size: 16px; }
.fx { width: 86px; justify-content: space-between; padding: 0 1px 0 6px; }
.fxbtn { font: italic 400 20px "Liberation Serif", serif; color: #333; }
.finput { flex: 1; margin-left: 4px; padding-right: 3px; }

/* Worksheet */
.work { display: flex; flex: 1; min-height: 0; }
.sheet { position: relative; flex: 1; min-width: 0; overflow: hidden; background: #fff; border-right: 1px solid #e0e0e0; }
.grid { width: 100%; table-layout: fixed; border-collapse: separate; border-spacing: 0; font: 15px/18px "Noto Sans CJK JP", sans-serif; font-weight: 300; color: #000; font-feature-settings: normal; }
.grid tr { height: 30px; }
.grid thead tr { height: 24px; }
.grid th, .grid td { border: solid #e0e0e0; border-width: 0 1px 1px 0; white-space: nowrap; }
.grid td { padding: 0 2px 5px; }
.grid th { padding: 0; background: #efefef; font-weight: 300; color: #222; border-color: #b4b4b4; }
.grid thead th { border-bottom-color: #999; }
.grid tbody th { padding-top: 3px; border-right-color: #999; }
.grid th.sel { background: #d2d2d2; color: #0e5c34; }
.grid thead th.sel { border-bottom: 2px solid #217346; }
.grid tbody th.sel { border-right: 2px solid #217346; }
.corner svg { display: block; margin-left: auto; margin-right: 3px; }
.grid .num { text-align: right; }
.grid .title { padding: 0 0 3px 3px; font-size: 16px; font-weight: 600; border-bottom-color: #f2ceef; }
.grid .under { border-bottom-color: #f2ceef; }
.grid .head { padding-bottom: 3px; background: #f2ceef; border-color: #f2ceef; text-align: center; font-weight: 600; }
.grid .ruled { border-bottom-color: #000; }
.grid .fill { background: #c6c6c6; border-color: #aeaeae; }
.grid .current { background: #fff; }
.thin { font-weight: 300; }
.c-row { width: 34px; }
.c-no { width: 49px; }
.c-name { width: 112px; }
.c-dept { width: 107px; }
.c-wide { width: 180px; }
.c-std { width: 72px; }

.selection { position: absolute; left: 300px; top: 82px; width: 723px; height: 303px; border: 2px solid #217346; pointer-events: none; }
.handle { position: absolute; right: -3px; bottom: -3px; width: 6px; height: 6px; background: #217346; border: solid #fff; border-width: 1px 0 0 1px; }
.dropdown { position: absolute; left: 482px; top: 95px; display: flex; align-items: center; justify-content: center; width: 17px; height: 17px; border: 1px solid #a0a6ad; background: #f4f6f8; }
.autofill { position: absolute; left: 989px; top: 385px; display: flex; justify-content: center; width: 20px; height: 20px; padding-top: 3px; border: 1px solid #aaa; background: #f4f4f4; }
.frame { position: absolute; left: 295px; top: 80px; width: 730px; height: 40px; border: 7px solid #f00; border-radius: 7px; filter: drop-shadow(2px 3px 3px rgba(0, 0, 0, .6)); }
.arrow { position: absolute; left: 996px; top: 122px; filter: drop-shadow(2px 2px 3px rgba(0, 0, 0, .55)); }
.mark {
  position: absolute;
  width: 60px;
  font: 44px/60px "Noto Sans CJK JP", sans-serif;
  text-align: center;
  color: #f00;
  -webkit-text-stroke: 6px #fff;
  paint-order: stroke fill;
  filter: drop-shadow(2px 3px 2px rgba(0, 0, 0, .6));
}
.m11 { left: 579px; top: 118px; }
.m12 { left: 978px; top: 383px; }

.vscroll { display: flex; flex-direction: column; align-items: center; width: 17px; margin: 0 2px; padding: 5px 0 7px; border-radius: 8px; background: #f6f6f6; }
.up, .down { border: 5px solid transparent; }
.up { border-top-width: 0; border-bottom: 7px solid #707070; }
.down { border-bottom-width: 0; border-top: 7px solid #707070; }
.vthumb { flex: 1; width: 9px; margin: 5px 0 11px; border-radius: 5px; background: #707070; }

/* Sheet tabs */
.sheetbar { display: flex; align-items: center; flex: none; height: 32px; padding: 0 18px 2px 0; border-top: 1px solid #dcdcdc; }
.sheetnav { display: flex; width: 116px; padding-left: 16px; }
.nav { display: flex; align-items: center; justify-content: center; width: 32px; height: 24px; color: #888; }
.sheettab { align-self: flex-start; margin-top: -1px; width: 68px; height: 29px; padding: 4px 8px; border-radius: 0 0 5px 5px; background: #fff; font-size: 14px; text-align: center; box-shadow: 0 0 1px #999; clip-path: inset(0 -2px -2px); }
.sheettab span { display: block; line-height: 20px; border-bottom: 2px solid #107c41; }
.tabsep { width: 1px; height: 18px; margin-left: 4px; background: #c8c8c8; }
.add { display: flex; align-items: center; justify-content: center; width: 32px; height: 24px; margin-left: 31px; }
.hdots { margin-left: auto; margin-right: 7px; font-size: 14px; }
.hscroll { display: flex; align-items: center; width: 729px; height: 17px; padding: 0 6px; border-radius: 8px; background: #f6f6f6; }
.left, .right { border: 4px solid transparent; }
.left { border-left-width: 0; border-right: 7px solid #707070; }
.right { border-right-width: 0; border-left: 7px solid #707070; }
.hthumb { flex: 1; height: 9px; margin: 0 30px 0 3px; border-radius: 4px; background: #707070; }

/* Status bar */
.status { display: flex; align-items: center; flex: none; height: 22px; padding: 0 20px 1px 12px; border-top: 1px solid #c8c8c8; background: #f4f4f4; }
.macro { margin-left: 19px; }
.views { display: flex; align-items: center; align-self: stretch; margin-left: auto; }
.view { display: flex; align-items: center; justify-content: center; width: 40px; height: 100%; }
.on { background: #e0e0e0; }
.zbtn { width: 9px; margin: 0 4px; }
.zoom { appearance: none; width: 100px; height: 14px; margin: 0; background: linear-gradient(#777, #777) center / 100% 1px no-repeat; }
.zoom::-webkit-slider-thumb { appearance: none; width: 5px; height: 12px; background: #606060; }
.pct { width: 34px; margin-left: 7px; text-align: right; }
.views .view:nth-child(3) { margin-right: 2px; }
```
FILE: grid.js
```js
const columns = "ABCDEFGHIJKLMNOPQRS".split("");
const rowCount = 26;
const people = [
  ["上野山 伸子", "営業部"],
  ["橋本 真由", "人事部"],
  ["野口 大介", "技術開発部"],
  ["安田 郁美", "人事部"],
  ["瀬古 紘司", "営業部"],
  ["松井 友美", "人事部"],
  ["清水 寿人", "営業部"],
  ["堀尾 潤", "技術開発部"],
  ["宮嶋 健二", "技術開発部"],
  ["吉田 大輔", "営業部"],
];
const heads = ["No", "氏名", "所属部門", "ビジネスマナー研修", "コンプライアンス講習", "ハラスメント防止研修", "プレゼンテーション研修"];
const title = '●受講希望アンケート入力表<span class="thin">（</span>第1希望<span class="thin">「〇」</span>を1つ、第2希望<span class="thin">「△」</span>を2つまで<span class="thin">）</span>';

const inRange = (c) => c >= 3 && c <= 6;
const td = (cls, text = "", extra = "") => `<td${cls ? ` class="${cls}"` : ""}${extra}>${text}</td>`;

function cell(r, c) {
  if (r === 1) return td(c < 7 ? "under" : "");
  if (r === 2) return c < 7 ? td(c < 3 ? "head ruled" : "head", heads[c]) : td("");
  if (r > 12) return td("");
  const [name, dept] = people[r - 3];
  if (c === 0) return td("num", r - 2);
  if (c === 1) return td("", name);
  if (c === 2) return td("", dept);
  if (inRange(c)) return td(r === 3 && c === 3 ? "fill current" : "fill");
  if (c === 8) return td("", "〇");
  if (c === 9) return td("", "△");
  return td("");
}

const widths = ["c-row", "c-no", "c-name", "c-dept", ...Array(4).fill("c-wide"), ...Array(12).fill("c-std")];
let html = "<colgroup>" + widths.map((w) => `<col class="${w}">`).join("") + "<col></colgroup><thead><tr>";
html += '<th class="corner"><svg viewBox="0 0 16 16" width="16" height="16"><path d="M16 0v16H0z" fill="#b4b4b4"/></svg></th>';
html += columns.map((l, c) => `<th scope="col"${inRange(c) ? ' class="sel"' : ""}>${l}</th>`).join("") + "<th></th></tr></thead><tbody>";
for (let r = 1; r <= rowCount; r++) {
  html += `<tr><th scope="row"${r > 2 && r < 13 ? ' class="sel"' : ""}>${r}</th>`;
  if (r === 1) html += td("title", title, ' colspan="5"');
  for (let c = r === 1 ? 5 : 0; c < 20; c++) html += cell(r, c);
  html += "</tr>";
}
document.getElementById("grid").innerHTML = html + "</tbody>";
```
